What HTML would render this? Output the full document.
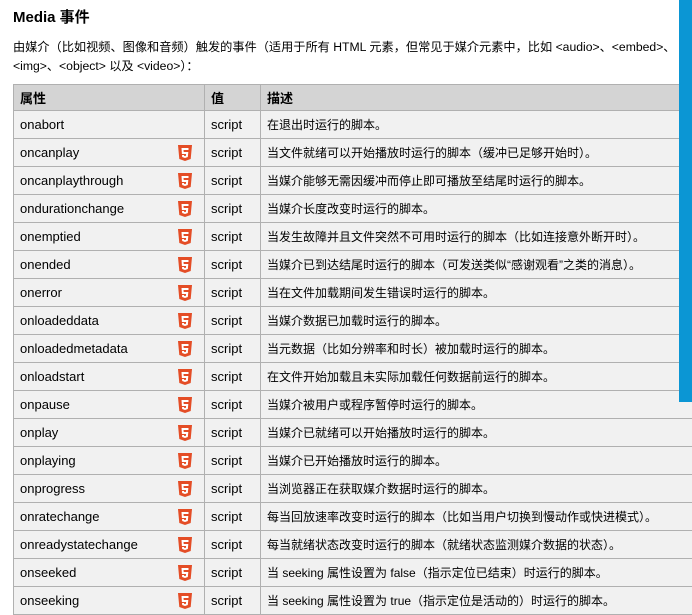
<!DOCTYPE html>
<html><head><meta charset="utf-8"><style>
body{margin:0;width:692px;height:612px;overflow:hidden;background:#fff;font-family:"Liberation Sans","Noto Sans CJK SC",sans-serif;font-size:13px;color:#000;position:relative}
h2{position:absolute;left:13px;top:6px;margin:0;font-size:15px;font-weight:bold}
p{position:absolute;left:13px;top:38px;margin:0;width:680px;line-height:19px;white-space:nowrap;font-size:12.2px}
table{position:absolute;left:13px;top:84px;border-collapse:collapse;width:690px;table-layout:fixed}
td,th{border:1px solid #b0b0b0;height:27px;padding:0 6px;text-align:left;background:#f1f1f1;white-space:nowrap;overflow:hidden}
td:nth-child(3){font-size:12px}
th{background:#d4d4d4;height:25px;font-weight:bold}
td:first-child{position:relative}
.i{position:absolute;left:164px;top:6px}
.bar{position:absolute;left:679px;top:0;width:13px;height:402px;background:#0b96d4}
</style></head><body>
<h2>Media 事件</h2>
<p>由媒介（比如视频、图像和音频）触发的事件（适用于所有 HTML 元素，但常见于媒介元素中，比如 &lt;audio&gt;、&lt;embed&gt;、<br>&lt;img&gt;、&lt;object&gt; 以及 &lt;video&gt;）：</p>
<table>
<colgroup><col style="width:191px"><col style="width:56px"><col></colgroup>
<tr><th>属性</th><th>值</th><th>描述</th></tr>
<tr><td>onabort</td><td>script</td><td>在退出时运行的脚本。</td></tr>
<tr><td>oncanplay<svg class="i" width="14" height="16" viewBox="0 0 14 16"><path d="M0 0H14L12.7 14 7 16 1.3 14Z" fill="#e44d26"/><path d="M3.5 3H10.5V5H5.5L5.7 7H10.3L9.8 12 7 13 4.2 12 4 10H6L6.1 10.8 7 11.1 7.9 10.8 8.1 9H3.9Z" fill="#fff"/></svg></td><td>script</td><td>当文件就绪可以开始播放时运行的脚本（缓冲已足够开始时）。</td></tr>
<tr><td>oncanplaythrough<svg class="i" width="14" height="16" viewBox="0 0 14 16"><path d="M0 0H14L12.7 14 7 16 1.3 14Z" fill="#e44d26"/><path d="M3.5 3H10.5V5H5.5L5.7 7H10.3L9.8 12 7 13 4.2 12 4 10H6L6.1 10.8 7 11.1 7.9 10.8 8.1 9H3.9Z" fill="#fff"/></svg></td><td>script</td><td>当媒介能够无需因缓冲而停止即可播放至结尾时运行的脚本。</td></tr>
<tr><td>ondurationchange<svg class="i" width="14" height="16" viewBox="0 0 14 16"><path d="M0 0H14L12.7 14 7 16 1.3 14Z" fill="#e44d26"/><path d="M3.5 3H10.5V5H5.5L5.7 7H10.3L9.8 12 7 13 4.2 12 4 10H6L6.1 10.8 7 11.1 7.9 10.8 8.1 9H3.9Z" fill="#fff"/></svg></td><td>script</td><td>当媒介长度改变时运行的脚本。</td></tr>
<tr><td>onemptied<svg class="i" width="14" height="16" viewBox="0 0 14 16"><path d="M0 0H14L12.7 14 7 16 1.3 14Z" fill="#e44d26"/><path d="M3.5 3H10.5V5H5.5L5.7 7H10.3L9.8 12 7 13 4.2 12 4 10H6L6.1 10.8 7 11.1 7.9 10.8 8.1 9H3.9Z" fill="#fff"/></svg></td><td>script</td><td>当发生故障并且文件突然不可用时运行的脚本（比如连接意外断开时）。</td></tr>
<tr><td>onended<svg class="i" width="14" height="16" viewBox="0 0 14 16"><path d="M0 0H14L12.7 14 7 16 1.3 14Z" fill="#e44d26"/><path d="M3.5 3H10.5V5H5.5L5.7 7H10.3L9.8 12 7 13 4.2 12 4 10H6L6.1 10.8 7 11.1 7.9 10.8 8.1 9H3.9Z" fill="#fff"/></svg></td><td>script</td><td>当媒介已到达结尾时运行的脚本（可发送类似“感谢观看”之类的消息）。</td></tr>
<tr><td>onerror<svg class="i" width="14" height="16" viewBox="0 0 14 16"><path d="M0 0H14L12.7 14 7 16 1.3 14Z" fill="#e44d26"/><path d="M3.5 3H10.5V5H5.5L5.7 7H10.3L9.8 12 7 13 4.2 12 4 10H6L6.1 10.8 7 11.1 7.9 10.8 8.1 9H3.9Z" fill="#fff"/></svg></td><td>script</td><td>当在文件加载期间发生错误时运行的脚本。</td></tr>
<tr><td>onloadeddata<svg class="i" width="14" height="16" viewBox="0 0 14 16"><path d="M0 0H14L12.7 14 7 16 1.3 14Z" fill="#e44d26"/><path d="M3.5 3H10.5V5H5.5L5.7 7H10.3L9.8 12 7 13 4.2 12 4 10H6L6.1 10.8 7 11.1 7.9 10.8 8.1 9H3.9Z" fill="#fff"/></svg></td><td>script</td><td>当媒介数据已加载时运行的脚本。</td></tr>
<tr><td>onloadedmetadata<svg class="i" width="14" height="16" viewBox="0 0 14 16"><path d="M0 0H14L12.7 14 7 16 1.3 14Z" fill="#e44d26"/><path d="M3.5 3H10.5V5H5.5L5.7 7H10.3L9.8 12 7 13 4.2 12 4 10H6L6.1 10.8 7 11.1 7.9 10.8 8.1 9H3.9Z" fill="#fff"/></svg></td><td>script</td><td>当元数据（比如分辨率和时长）被加载时运行的脚本。</td></tr>
<tr><td>onloadstart<svg class="i" width="14" height="16" viewBox="0 0 14 16"><path d="M0 0H14L12.7 14 7 16 1.3 14Z" fill="#e44d26"/><path d="M3.5 3H10.5V5H5.5L5.7 7H10.3L9.8 12 7 13 4.2 12 4 10H6L6.1 10.8 7 11.1 7.9 10.8 8.1 9H3.9Z" fill="#fff"/></svg></td><td>script</td><td>在文件开始加载且未实际加载任何数据前运行的脚本。</td></tr>
<tr><td>onpause<svg class="i" width="14" height="16" viewBox="0 0 14 16"><path d="M0 0H14L12.7 14 7 16 1.3 14Z" fill="#e44d26"/><path d="M3.5 3H10.5V5H5.5L5.7 7H10.3L9.8 12 7 13 4.2 12 4 10H6L6.1 10.8 7 11.1 7.9 10.8 8.1 9H3.9Z" fill="#fff"/></svg></td><td>script</td><td>当媒介被用户或程序暂停时运行的脚本。</td></tr>
<tr><td>onplay<svg class="i" width="14" height="16" viewBox="0 0 14 16"><path d="M0 0H14L12.7 14 7 16 1.3 14Z" fill="#e44d26"/><path d="M3.5 3H10.5V5H5.5L5.7 7H10.3L9.8 12 7 13 4.2 12 4 10H6L6.1 10.8 7 11.1 7.9 10.8 8.1 9H3.9Z" fill="#fff"/></svg></td><td>script</td><td>当媒介已就绪可以开始播放时运行的脚本。</td></tr>
<tr><td>onplaying<svg class="i" width="14" height="16" viewBox="0 0 14 16"><path d="M0 0H14L12.7 14 7 16 1.3 14Z" fill="#e44d26"/><path d="M3.5 3H10.5V5H5.5L5.7 7H10.3L9.8 12 7 13 4.2 12 4 10H6L6.1 10.8 7 11.1 7.9 10.8 8.1 9H3.9Z" fill="#fff"/></svg></td><td>script</td><td>当媒介已开始播放时运行的脚本。</td></tr>
<tr><td>onprogress<svg class="i" width="14" height="16" viewBox="0 0 14 16"><path d="M0 0H14L12.7 14 7 16 1.3 14Z" fill="#e44d26"/><path d="M3.5 3H10.5V5H5.5L5.7 7H10.3L9.8 12 7 13 4.2 12 4 10H6L6.1 10.8 7 11.1 7.9 10.8 8.1 9H3.9Z" fill="#fff"/></svg></td><td>script</td><td>当浏览器正在获取媒介数据时运行的脚本。</td></tr>
<tr><td>onratechange<svg class="i" width="14" height="16" viewBox="0 0 14 16"><path d="M0 0H14L12.7 14 7 16 1.3 14Z" fill="#e44d26"/><path d="M3.5 3H10.5V5H5.5L5.7 7H10.3L9.8 12 7 13 4.2 12 4 10H6L6.1 10.8 7 11.1 7.9 10.8 8.1 9H3.9Z" fill="#fff"/></svg></td><td>script</td><td>每当回放速率改变时运行的脚本（比如当用户切换到慢动作或快进模式）。</td></tr>
<tr><td>onreadystatechange<svg class="i" width="14" height="16" viewBox="0 0 14 16"><path d="M0 0H14L12.7 14 7 16 1.3 14Z" fill="#e44d26"/><path d="M3.5 3H10.5V5H5.5L5.7 7H10.3L9.8 12 7 13 4.2 12 4 10H6L6.1 10.8 7 11.1 7.9 10.8 8.1 9H3.9Z" fill="#fff"/></svg></td><td>script</td><td>每当就绪状态改变时运行的脚本（就绪状态监测媒介数据的状态）。</td></tr>
<tr><td>onseeked<svg class="i" width="14" height="16" viewBox="0 0 14 16"><path d="M0 0H14L12.7 14 7 16 1.3 14Z" fill="#e44d26"/><path d="M3.5 3H10.5V5H5.5L5.7 7H10.3L9.8 12 7 13 4.2 12 4 10H6L6.1 10.8 7 11.1 7.9 10.8 8.1 9H3.9Z" fill="#fff"/></svg></td><td>script</td><td>当 seeking 属性设置为 false（指示定位已结束）时运行的脚本。</td></tr>
<tr><td>onseeking<svg class="i" width="14" height="16" viewBox="0 0 14 16"><path d="M0 0H14L12.7 14 7 16 1.3 14Z" fill="#e44d26"/><path d="M3.5 3H10.5V5H5.5L5.7 7H10.3L9.8 12 7 13 4.2 12 4 10H6L6.1 10.8 7 11.1 7.9 10.8 8.1 9H3.9Z" fill="#fff"/></svg></td><td>script</td><td>当 seeking 属性设置为 true（指示定位是活动的）时运行的脚本。</td></tr>
</table>
<div class="bar"></div>
</body></html>
